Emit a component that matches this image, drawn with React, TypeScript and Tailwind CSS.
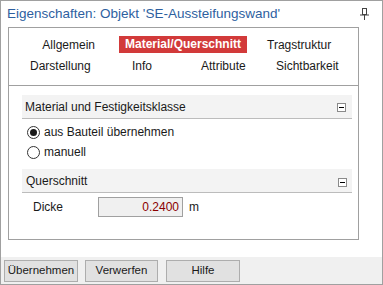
import { useState } from 'react';

const tabsRow1 = ['Allgemein', 'Material/Querschnitt', 'Tragstruktur'];
const tabsRow2 = ['Darstellung', 'Info', 'Attribute', 'Sichtbarkeit'];

function PinIcon() {
  return (
    <svg width="9" height="12" viewBox="0 0 9 12" className="block">
      <rect x="2.5" y="0.5" width="4" height="6" fill="none" stroke="#444" />
      <line x1="0" y1="7" x2="9" y2="7" stroke="#444" />
      <line x1="4.5" y1="7" x2="4.5" y2="12" stroke="#444" />
    </svg>
  );
}

function CollapseBox() {
  return (
    <div className="w-[9px] h-[9px] border border-[#8a8a8a] bg-white flex items-center justify-center">
      <div className="w-[5px] h-[1px] bg-black" />
    </div>
  );
}

function Radio({ checked, label, onClick }: { checked: boolean; label: string; onClick: () => void }) {
  return (
    <div className="flex items-center h-[20px] cursor-default" onClick={onClick}>
      <div className="w-[13px] h-[13px] rounded-full border border-[#333] bg-white flex items-center justify-center">
        {checked && <div className="w-[7px] h-[7px] rounded-full bg-[#1a1a1a]" />}
      </div>
      <span className="ml-[4px]">{label}</span>
    </div>
  );
}

export default function App() {
  const [active, setActive] = useState('Material/Querschnitt');
  const [mode, setMode] = useState('bauteil');

  const tab = (name: string) =>
    name === active ? (
      <span className="px-[6px] h-[17px] leading-[17px] bg-[#d23a3a] text-white font-bold">{name}</span>
    ) : (
      <span className="h-[17px] leading-[17px] cursor-default" onClick={() => setActive(name)}>
        {name}
      </span>
    );

  return (
    <div
      className="w-[383px] h-[285px] border border-[#a0a0a0] bg-white flex flex-col text-[12px] text-[#1a1a1a]"
      style={{ fontFamily: '"Liberation Sans", Arial, sans-serif' }}
    >
      {/* title */}
      <div className="h-[26px] flex items-center pl-[6px] pr-[13px] text-[13.5px] text-[#2e5f9f]">
        <span className="flex-1">Eigenschaften: Objekt 'SE-Aussteifungswand'</span>
        <PinIcon />
      </div>

      {/* panel */}
      <div className="ml-[7px] w-[351px] h-[213px] border border-[#a0a0a0] flex flex-col">
        <div className="h-[58px] border-b border-[#a0a0a0] pt-[7px]">
          <div className="grid grid-cols-[110px_139px_1fr] items-center h-[19px]">
            <div className="justify-self-end pr-[24px]">{tab(tabsRow1[0])}</div>
            <div className="flex">{tab(tabsRow1[1])}</div>
            <div className="pl-[9px]">{tab(tabsRow1[2])}</div>
          </div>
          <div className="flex items-center h-[19px] mt-[2px]">
            <div className="ml-[21px] w-[102px]">{tab(tabsRow2[0])}</div>
            <div className="w-[69px]">{tab(tabsRow2[1])}</div>
            <div className="w-[75px]">{tab(tabsRow2[2])}</div>
            <div>{tab(tabsRow2[3])}</div>
          </div>
        </div>

        <div className="ml-[13px] mr-[6px] mt-[9px]">
          <div className="h-[24px] bg-[#f3f3f3] border-b border-[#bcbcbc] flex items-center pl-[3px] pr-[6px]">
            <span className="flex-1">Material und Festigkeitsklasse</span>
            <div className="mt-[2px]">
              <CollapseBox />
            </div>
          </div>
          <div className="pl-[5px] pt-[3px]">
            <Radio checked={mode === 'bauteil'} label="aus Bauteil übernehmen" onClick={() => setMode('bauteil')} />
            <Radio checked={mode === 'manuell'} label="manuell" onClick={() => setMode('manuell')} />
          </div>

          <div className="mt-[7px] h-[24px] bg-[#f3f3f3] border-b border-[#bcbcbc] flex items-center pl-[4px] pr-[5px]">
            <span className="flex-1">Querschnitt</span>
            <div className="mt-[4px]">
              <CollapseBox />
            </div>
          </div>
          <div className="flex items-center mt-[4px] h-[20px]">
            <span className="pl-[11px] w-[76px]">Dicke</span>
            <div className="w-[85px] h-[20px] border border-[#a0a0a0] bg-[#f0f0f0] flex items-center justify-end pr-[3px] text-[#8b0000]">
              0.2400
            </div>
            <span className="ml-[6px]">m</span>
          </div>
        </div>
      </div>

      <div className="flex-1" />

      {/* buttons */}
      <div className="h-[27px] bg-[#f0f0f0] flex items-center pl-[3px]">
        <button className="w-[74px] h-[22px] bg-[#e1e1e1] border border-[#adadad] text-[11.5px]">Übernehmen</button>
        <button className="w-[73px] h-[22px] bg-[#e1e1e1] border border-[#adadad] text-[11.5px] ml-[7px]">Verwerfen</button>
        <button className="w-[74px] h-[22px] bg-[#e1e1e1] border border-[#adadad] text-[11.5px] ml-[8px]">Hilfe</button>
      </div>
    </div>
  );
}
